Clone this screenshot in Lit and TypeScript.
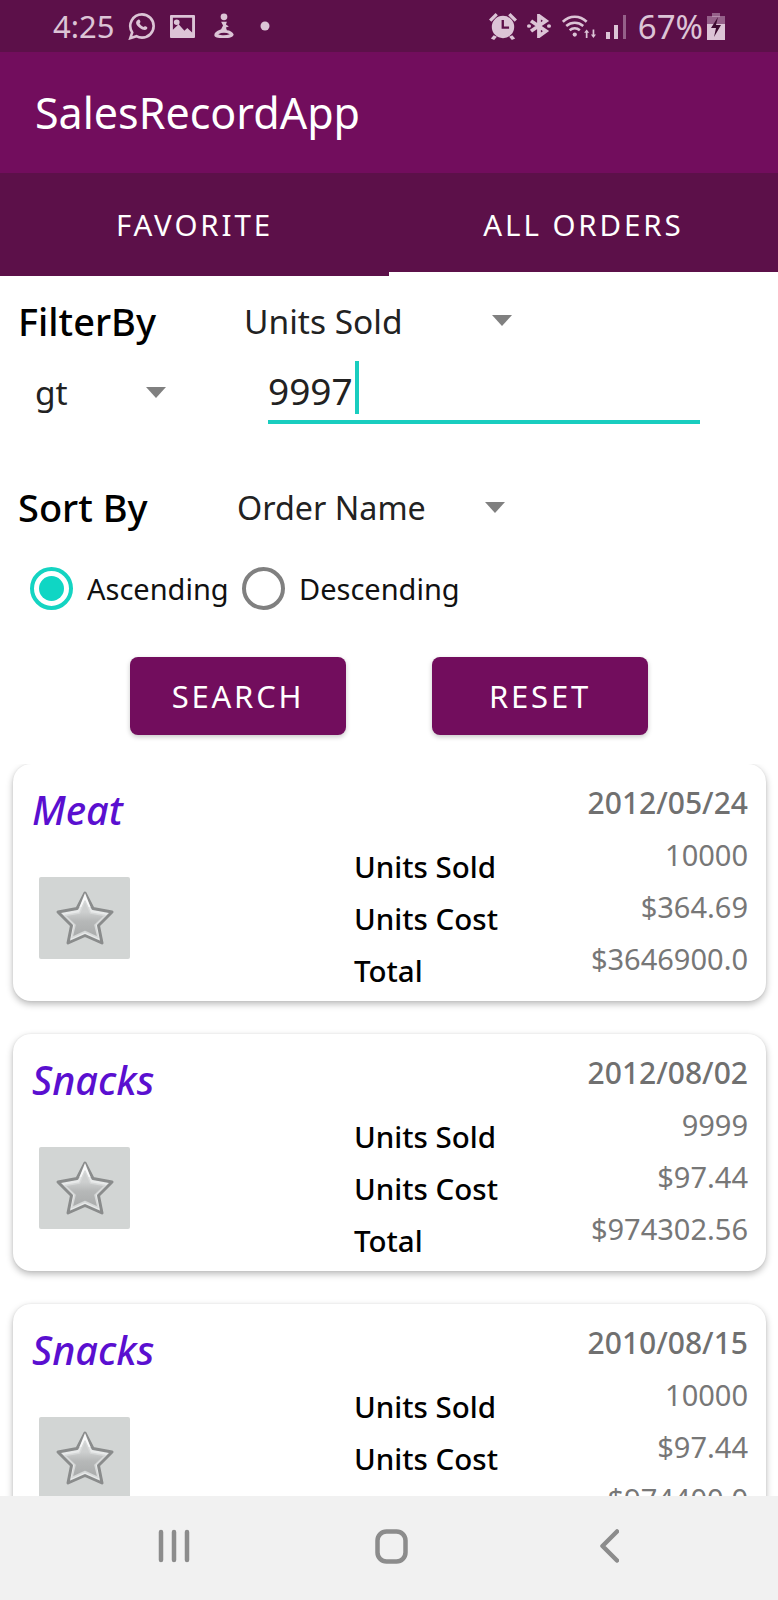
import { LitElement, html, css } from "lit";
import { customElement } from "lit/decorators.js";

const orders = [
  { name: "Meat", date: "2012/05/24", sold: "10000", cost: "$364.69", total: "$3646900.0" },
  { name: "Snacks", date: "2012/08/02", sold: "9999", cost: "$97.44", total: "$974302.56" },
  { name: "Snacks", date: "2010/08/15", sold: "10000", cost: "$97.44", total: "$974400.0" },
];

const STAR_OUT = "M30 3 L38 18.500 L57 22 L43.500 35.500 L47 53 L30 45.500 L13 53 L16.500 35.500 L3 22 L22 18.500 Z";
const STAR_IN = "M30 11 L35.500 23 L50 25.500 L40 35 L43 47.500 L30 41.500 L17 47.500 L20 35 L10 25.500 L24.500 23 Z";

const star = (i: number) => html`<svg class="star" viewBox="0 0 60 56">
  <defs>
    <linearGradient id="sg${i}" x1="0" y1="0" x2="0" y2="1"><stop offset="0.3" stop-color="#cdcfcf"/><stop offset="0.55" stop-color="#b6b8b8"/><stop offset="1" stop-color="#a9abab"/></linearGradient>
    <filter id="sb${i}" x="-10%" y="-10%" width="120%" height="120%"><feGaussianBlur stdDeviation="0.6"/></filter>
  </defs>
  <g filter="url(#sb${i})">
    <path d="${STAR_OUT}" fill="#e8eaea" stroke="#8a8c8c" stroke-width="3" stroke-linejoin="round"/>
    <path d="M30 3 L24.500 17 L35.500 17 Z" fill="#f8f9f9"/>
    <path d="${STAR_IN}" fill="url(#sg${i})" stroke="#d6d8d8" stroke-width="1.500" stroke-linejoin="round"/>
  </g>
</svg>`;

@customElement("app-root")
export class AppRoot extends LitElement {
  static styles = css`
    :host { display: block; width: 778px; height: 1600px; overflow: hidden; background: #fff; font-family: "Noto Sans", sans-serif; color: #000; }
    .page { display: flex; flex-direction: column; height: 1600px; }
    .status { height: 52px; flex: none; background: #5c1049; color: #dcc4d6; display: flex; align-items: center; padding: 0 53px 0 53px; font-size: 31px; box-sizing: border-box; }
    .status svg { display: block; fill: #dcc4d6; flex: none; }
    .time { width: 74px; flex: none; }
    .left { display: flex; align-items: center; flex: 1; }
    .right { display: flex; align-items: center; }
    .ml4 { margin-left: 4px; } .ml9 { margin-left: 9px; } .ml11 { margin-left: 11px; } .ml13 { margin-left: 13px; } .ml17 { margin-left: 17px; } .ml24 { margin-left: 24px; }
    .pct { font-size: 33px; margin-left: 11px; }
    .appbar { height: 121px; flex: none; background: #720d5d; color: #fff; font-size: 43px; display: flex; align-items: center; padding-left: 35px; }
    .tabs { height: 103px; flex: none; background: #5c1049; display: grid; grid-template-columns: 1fr 1fr; color: #fff; font-size: 29.500px; letter-spacing: 2.900px; }
    .tab { display: flex; align-items: center; justify-content: center; }
    .tab.on { box-shadow: inset 0 -4px 0 #fff; }
    .form { flex: none; height: 488px; box-sizing: border-box; display: flex; flex-direction: column; }
    .row { display: flex; align-items: center; }
    .r1 { height: 84px; padding: 6px 0 0 18px; box-sizing: border-box; }
    .lbl { font-size: 38px; font-weight: 500; }
    .lbl.w1 { width: 226px; } .lbl.w2 { width: 219px; }
    .sel { display: flex; align-items: center; color: #222; font-size: 33.500px; }
    .sel.order { font-size: 32.300px; }
    .sel .wide { width: 248px; } .sel .narrow { width: 111px; }
    .tri { width: 0; height: 0; border-left: 10.500px solid transparent; border-right: 10.500px solid transparent; border-top: 11px solid #808080; margin-top: 0; }
    .r1 .tri { margin-top: -2px; }
    .r2 { height: 64px; padding-left: 35px; }
    .input { margin-left: 102px; width: 432px; height: 63px; border-bottom: 4.500px solid #19cdbf; font-size: 37px; color: #222; display: flex; align-items: center; box-sizing: border-box; }
    .caret { width: 4px; height: 53px; background: #19cdbf; margin-left: 2px; align-self: flex-start; }
    .r3 { height: 90px; margin-top: 38px; padding-left: 18px; }
    .r4 { height: 50px; padding-left: 30px; font-size: 29px; color: #111; margin-top: 11px; }
    .rt { margin-left: 14px; } .rt.first { width: 155px; }
    .radio { width: 43px; height: 43px; border-radius: 50%; border: 4px solid #808080; box-sizing: border-box; display: flex; align-items: center; justify-content: center; flex: none; }
    .radio.on { border-color: #14d4c2; }
    .radio.on::after { content: ""; width: 25px; height: 25px; border-radius: 50%; background: #0fd6c4; }
    .btns { display: flex; gap: 86px; padding-left: 130px; margin-top: 44px; }
    .btn { width: 216px; height: 78px; border-radius: 8px; background: #720d5d; color: #fff; font-size: 31px; letter-spacing: 2.800px; display: flex; align-items: center; justify-content: center; box-shadow: 0 2px 5px rgba(0,0,0,.22); }
    .list { flex: 1; min-height: 0; overflow: hidden; display: flex; flex-direction: column; gap: 33px; padding: 0 12px 0 13px; }
    .card { flex: none; height: 237px; border-radius: 18px; background: #fff; box-shadow: 0 3px 7px rgba(0,0,0,.28), 0 0 2px rgba(0,0,0,.08); display: grid; grid-template-columns: 322px 1fr; padding: 0 18px 0 19px; box-sizing: border-box; }
    .name { font-size: 39.500px; font-style: italic; font-weight: 500; color: #5a0fd0; margin-top: 21px; line-height: 50px; }
    .tile { width: 91px; height: 82px; background: #d2d5d4; border-radius: 2px; margin: 42px 0 0 7px; display: flex; align-items: center; justify-content: center; }
    .star { width: 60px; height: 56px; display: block; }
    .body { display: grid; grid-template-columns: auto 1fr; }
    .labels { padding-top: 77px; display: flex; flex-direction: column; font-size: 29.500px; font-weight: 500; line-height: 52px; }
    .vals { text-align: right; color: #777; font-size: 29px; line-height: 52px; padding-top: 13px; }
    .date { font-weight: 500; font-size: 30px; color: #707070; }
    .nav { height: 104px; flex: none; background: #f1f1f1; display: flex; align-items: center; padding-left: 158px; padding-bottom: 4px; box-sizing: border-box; }
    .nav svg { display: block; flex: none; }
    .sp1 { margin-left: 185px; } .sp2 { margin-left: 192px; }
  `;

  render() {
    return html`<div class="page">
      <div class="status">
        <div class="left">
          <span class="time">4:25</span>
          <svg width="30" height="28" viewBox="0 0 30 30"><path fill="none" stroke="#dcc4d6" stroke-width="2.800" d="M15 2.500a12.500 12.500 0 0 1 0 25c-2.200 0-4.300-.6-6-1.600L2.500 28l2-6.200A12.500 12.500 0 0 1 15 2.500z"/><path d="M10.500 8.500c1-1 2-.5 2.500.8.500 1.200.4 1.600-.6 2.800.9 1.900 2.300 3.200 4.200 4 1.100-1.100 1.700-1.100 2.800-.5 1.500.8 1.700 1.500.9 2.700-1.400 1.800-4.600 1.400-7.900-1.300-3.600-3-5.200-6.300-1.900-8.500z"/></svg>
          <svg class="ml13" width="25" height="23" viewBox="0 0 26 25" preserveAspectRatio="none"><path fill-rule="evenodd" d="M1 0h24a1 1 0 0 1 1 1v23a1 1 0 0 1-1 1H1a1 1 0 0 1-1-1V1a1 1 0 0 1 1-1zM3 3v13l6-6 6 7 3-3 5 5V3zM7 5a3 3 0 1 1 0 6 3 3 0 0 1 0-6z"/></svg>
          <svg class="ml17" width="24" height="26" viewBox="0 0 24 27"><circle cx="12" cy="4" r="3.500"/><path d="M9 9h6l-1 3 3 2-3 1 1 3c3 0 6 2 7 4 0 3-4 4-10 4-7 0-10-1-10-3 0-3 4-5 7-6l2-4z"/><path fill="#5c1049" d="M6 22c3 1.500 8 1.500 12 0-4-2-8-2-12 0z"/></svg>
          <svg class="ml24" width="10" height="10" viewBox="0 0 10 10"><circle cx="5" cy="5" r="4.500"/></svg>
        </div>
        <div class="right">
          <svg width="30" height="28" viewBox="0 0 30 30"><path d="M15 4a12 12 0 1 1 0 24 12 12 0 0 1 0-24zM13.500 8.500v9.500h8v-2.500h-5.500v-7z" fill-rule="evenodd"/><path d="M0 8L7 1l2.500 2.500-7 7zM30 8l-7-7-2.500 2.500 7 7zM5 25l3.500 1.500-3 3.500-3.500-1.500zM25 25l-3.500 1.500 3 3.500 3.500-1.500z"/></svg>
          <svg class="ml9" width="24" height="24" viewBox="0 0 24 26" preserveAspectRatio="none"><path fill="none" stroke="#dcc4d6" stroke-width="3.800" d="M4 7.500l15 11L12 24V2l7 5.500-15 11"/><circle cx="2" cy="13" r="2"/><circle cx="22" cy="13" r="2"/></svg>
          <svg class="ml11" width="34" height="24" viewBox="0 0 40 28"><path fill="none" stroke="#dcc4d6" stroke-width="3" d="M1 9c8-8 20-8 28 0M5 14c6-5 14-5 20 0M9 19c3.500-3 8.500-3 12 0"/><circle cx="15" cy="24" r="2.500"/><path d="M24 28v-6h-2l3-4 3 4h-2v6zM33 28l-3-4h2v-6h2v6h2z" transform="translate(4 0)"/></svg>
          <svg class="ml9" width="22" height="25" viewBox="0 0 22 25"><rect x="1" y="18" width="4" height="7"/><rect x="9" y="11" width="4" height="14"/><rect x="18" y="1" width="3" height="24" fill-opacity=".45"/></svg>
          <span class="pct">67%</span>
          <svg class="ml4" width="18" height="27" viewBox="0 0 18 27"><rect x="5" y="0" width="8" height="4" fill-opacity=".45"/><rect x="0" y="3" width="18" height="8" fill-opacity=".45"/><rect x="0" y="11" width="18" height="16"/><path fill="#3d0a30" d="M11 4L4 15h5l-2 9 7-12H9z"/></svg>
        </div>
      </div>
      <div class="appbar">SalesRecordApp</div>
      <div class="tabs">
        <div class="tab">FAVORITE</div>
        <div class="tab on">ALL ORDERS</div>
      </div>
      <div class="form">
        <div class="row r1">
          <span class="lbl w1">FilterBy</span>
          <div class="sel"><span class="wide">Units Sold</span><span class="tri"></span></div>
        </div>
        <div class="row r2">
          <div class="sel"><span class="narrow">gt</span><span class="tri"></span></div>
          <div class="input">9997<span class="caret"></span></div>
        </div>
        <div class="row r3">
          <span class="lbl w2">Sort By</span>
          <div class="sel order"><span class="wide">Order Name</span><span class="tri"></span></div>
        </div>
        <div class="row r4">
          <span class="radio on"></span><span class="rt first">Ascending</span>
          <span class="radio"></span><span class="rt">Descending</span>
        </div>
        <div class="btns"><div class="btn">SEARCH</div><div class="btn">RESET</div></div>
      </div>
      <div class="list">
        ${orders.map((o, i) => html`<div class="card">
          <div>
            <div class="name">${o.name}</div>
            <div class="tile">${star(i)}</div>
          </div>
          <div class="body">
            <div class="labels"><span>Units Sold</span><span>Units Cost</span><span>Total</span></div>
            <div class="vals"><div class="date">${o.date}</div><div>${o.sold}</div><div>${o.cost}</div><div>${o.total}</div></div>
          </div>
        </div>`)}
      </div>
      <div class="nav">
        <svg width="32" height="34" viewBox="0 0 32 34"><path fill="none" stroke="#8c8c8c" stroke-width="4.500" stroke-linecap="round" d="M3 3v28M16 3v28M29 3v28"/></svg>
        <svg class="sp1" width="33" height="35" viewBox="0 0 33 35"><rect x="2.500" y="2.500" width="28" height="30" rx="9" fill="none" stroke="#8c8c8c" stroke-width="4.500"/></svg>
        <svg class="sp2" width="19" height="34" viewBox="0 0 19 34"><path fill="none" stroke="#8c8c8c" stroke-width="4.500" stroke-linecap="round" stroke-linejoin="round" d="M17 2.500L2.500 17 17 31.500"/></svg>
      </div>
    </div>`;
  }
}
